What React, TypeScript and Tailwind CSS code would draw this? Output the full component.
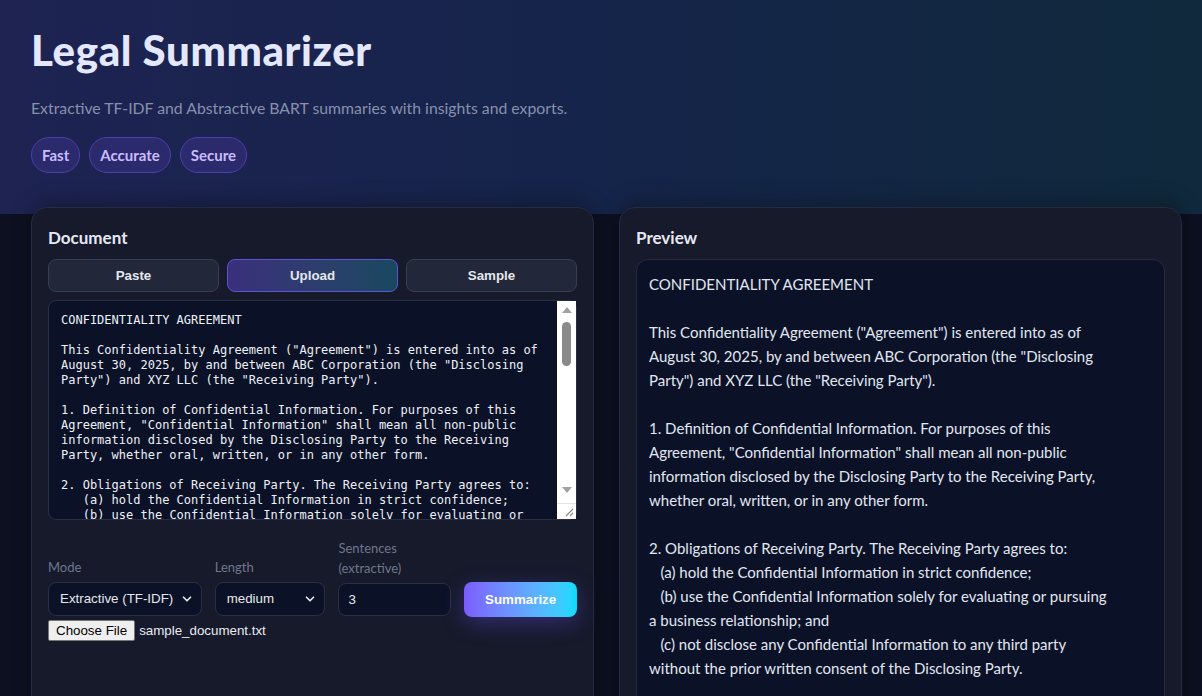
import { ChevronDown } from 'lucide-react';

const docText = `CONFIDENTIALITY AGREEMENT

This Confidentiality Agreement ("Agreement") is entered into as of August 30, 2025, by and between ABC Corporation (the "Disclosing Party") and XYZ LLC (the "Receiving Party").

1. Definition of Confidential Information. For purposes of this Agreement, "Confidential Information" shall mean all non-public information disclosed by the Disclosing Party to the Receiving Party, whether oral, written, or in any other form.

2. Obligations of Receiving Party. The Receiving Party agrees to:
   (a) hold the Confidential Information in strict confidence;
   (b) use the Confidential Information solely for evaluating or pursuing a business relationship; and
   (c) not disclose any Confidential Information to any third party without the prior written consent of the Disclosing Party.

3. Term. This Agreement shall remain in effect for a period of two (2) years from the date first written above, unless terminated earlier by mutual written agreement of the parties.

4. Return of Materials. Upon request, the Receiving Party shall promptly return or destroy all materials containing Confidential Information.

5. Governing Law. This Agreement shall be governed by the laws of the State of Delaware.`;

const sans = "font-['Lato','Noto_Sans',sans-serif]";
const arial = "font-['Liberation_Sans',Arial,sans-serif]";

export default function App() {
  return (
    <div className={`min-h-screen bg-[#0c1020] ${sans}`}>
      {/* header */}
      <header className="bg-gradient-to-r from-[#1e2352] via-[#15244a] to-[#10293c] px-[31px] pt-[26px] pb-[41px]">
        <h1 className="text-[42px] leading-[48px] font-black text-[#e3e8ff] tracking-[0.6px]">Legal Summarizer</h1>
        <p className="mt-[22px] text-[15.8px] leading-6 text-[#8790ad]">
          Extractive TF-IDF and Abstractive BART summaries with insights and exports.
        </p>
        <div className="mt-[17px] flex gap-[9px]">
          {['Fast', 'Accurate', 'Secure'].map((p) => (
            <span
              key={p}
              className="h-9 px-[10px] flex items-center rounded-full border border-[#4a3fae] bg-[#2b2a6c] text-[15px] font-bold text-[#c9bcff]"
            >
              {p}
            </span>
          ))}
        </div>
      </header>

      <main className="-mt-[7px] grid grid-cols-2 gap-[25px] pl-[31px] pr-[20px]">
        {/* document card */}
        <section className="rounded-2xl border border-[#262b40] bg-[#161a2a] px-[16px] pt-[18px] pb-6 shadow-[0_-6px_20px_rgba(0,0,0,0.25)]">
          <h2 className="text-[17px] leading-6 font-bold text-[#e6e9f5]">Document</h2>
          <div className="mt-[9px] grid grid-cols-3 gap-2">
            <button className={`h-[33px] rounded-lg border border-[#383d52] bg-[#23273a] text-[13.33px] font-bold text-[#e5e7eb] ${arial}`}>Paste</button>
            <button className={`h-[33px] rounded-lg border border-[#5b55d6] bg-gradient-to-r from-[#3a2f7c] to-[#18485f] text-[13.33px] font-bold text-[#e5e7eb] ${arial}`}>Upload</button>
            <button className={`h-[33px] rounded-lg border border-[#383d52] bg-[#23273a] text-[13.33px] font-bold text-[#e5e7eb] ${arial}`}>Sample</button>
          </div>
          <div className="relative mt-2">
            <textarea
              readOnly
              defaultValue={docText}
              className="block w-full h-[220px] resize-none overflow-hidden rounded-lg border border-[#2a2f45] bg-[#0b1228] py-3 pl-3 pr-[30px] font-['DejaVu_Sans_Mono',monospace] text-[12px] leading-[15px] text-[#eef0f6] outline-none"
            />
            {/* classic scrollbar */}
            <div className="absolute right-[1px] top-[1px] bottom-[1px] w-[19px] bg-white flex flex-col items-center">
              <svg width="10" height="6" viewBox="0 0 10 6" className="mt-[6px]"><path d="M0 6 L5 0 L10 6 Z" fill="#a3a3a3" /></svg>
              <div className="mt-[9px] w-[9px] h-[44px] rounded-full bg-[#8a8a8a]" />
              <div className="flex-1" />
              <svg width="10" height="6" viewBox="0 0 10 6" className="mb-[10px]"><path d="M0 0 L10 0 L5 6 Z" fill="#a3a3a3" /></svg>
              <div className="w-full h-[16px] border-t border-[#e4e4e4] flex items-end justify-end">
                <svg width="10" height="10" viewBox="0 0 10 10" className="mr-[2px] mb-[2px]">
                  <path d="M9 2 L2 9 M9 6 L6 9" stroke="#8a8a8a" strokeWidth="1.2" />
                </svg>
              </div>
            </div>
          </div>

          <div className="mt-[18px] flex items-end gap-[13px]">
            <label className="flex flex-col gap-[5px] w-[154px]">
              <span className="text-[13px] leading-5 text-[#6f768c]">Mode</span>
              <div className="relative">
                <select className={`appearance-none w-full h-[34px] rounded-lg border border-[#2a2f45] bg-[#0b1228] pl-[11px] text-[13.33px] text-[#e5e7eb] ${arial}`}>
                  <option>Extractive (TF-IDF)</option>
                </select>
                <ChevronDown size={14} strokeWidth={3} className="absolute right-[8px] top-[10px] text-[#e5e7eb] pointer-events-none" />
              </div>
            </label>
            <label className="flex flex-col gap-[5px] w-[111px]">
              <span className="text-[13px] leading-5 text-[#6f768c]">Length</span>
              <div className="relative">
                <select className={`appearance-none w-full h-[34px] rounded-lg border border-[#2a2f45] bg-[#0b1228] pl-[11px] text-[13.33px] text-[#e5e7eb] ${arial}`}>
                  <option>medium</option>
                </select>
                <ChevronDown size={14} strokeWidth={3} className="absolute right-[8px] top-[10px] text-[#e5e7eb] pointer-events-none" />
              </div>
            </label>
            <label className="flex flex-col gap-[5px] w-[113px]">
              <span className="text-[13px] leading-5 text-[#6f768c]">Sentences (extractive)</span>
              <input
                defaultValue="3"
                className={`w-full h-[33px] rounded-lg border border-[#2a2f45] bg-[#0b1228] px-[9px] text-[13.33px] text-[#e5e7eb] outline-none ${arial}`}
              />
            </label>
            <button
              className={`w-[113px] h-[35px] mb-[-1px] rounded-lg bg-gradient-to-r from-[#7b5cff] to-[#00dcff] text-[13.33px] font-bold text-white shadow-[0_6px_22px_rgba(110,80,255,0.35)] ${arial}`}
            >
              Summarize
            </button>
          </div>

          <div className={`mt-[4px] flex items-center gap-[4px] text-[13.33px] ${arial}`}>
            <span className="h-[21px] px-[7px] flex items-center rounded-[2px] border border-[#767676] bg-[#efefef] text-black">Choose File</span>
            <span className="text-[#e8eaf2]">sample_document.txt</span>
          </div>
        </section>

        {/* preview card */}
        <section className="rounded-2xl border border-[#262b40] bg-[#161a2a] px-[16px] pt-[18px] pb-6 shadow-[0_-6px_20px_rgba(0,0,0,0.25)]">
          <h2 className="text-[17px] leading-6 font-bold text-[#e6e9f5]">Preview</h2>
          <div className="mt-[9px] rounded-xl border border-[#262b40] bg-[#0b1228] px-3 py-[12px]">
            <div className="max-w-[464px] whitespace-pre-wrap text-[15px] leading-6 text-[#e2e6f0]">{docText}</div>
          </div>
        </section>
      </main>
    </div>
  );
}
